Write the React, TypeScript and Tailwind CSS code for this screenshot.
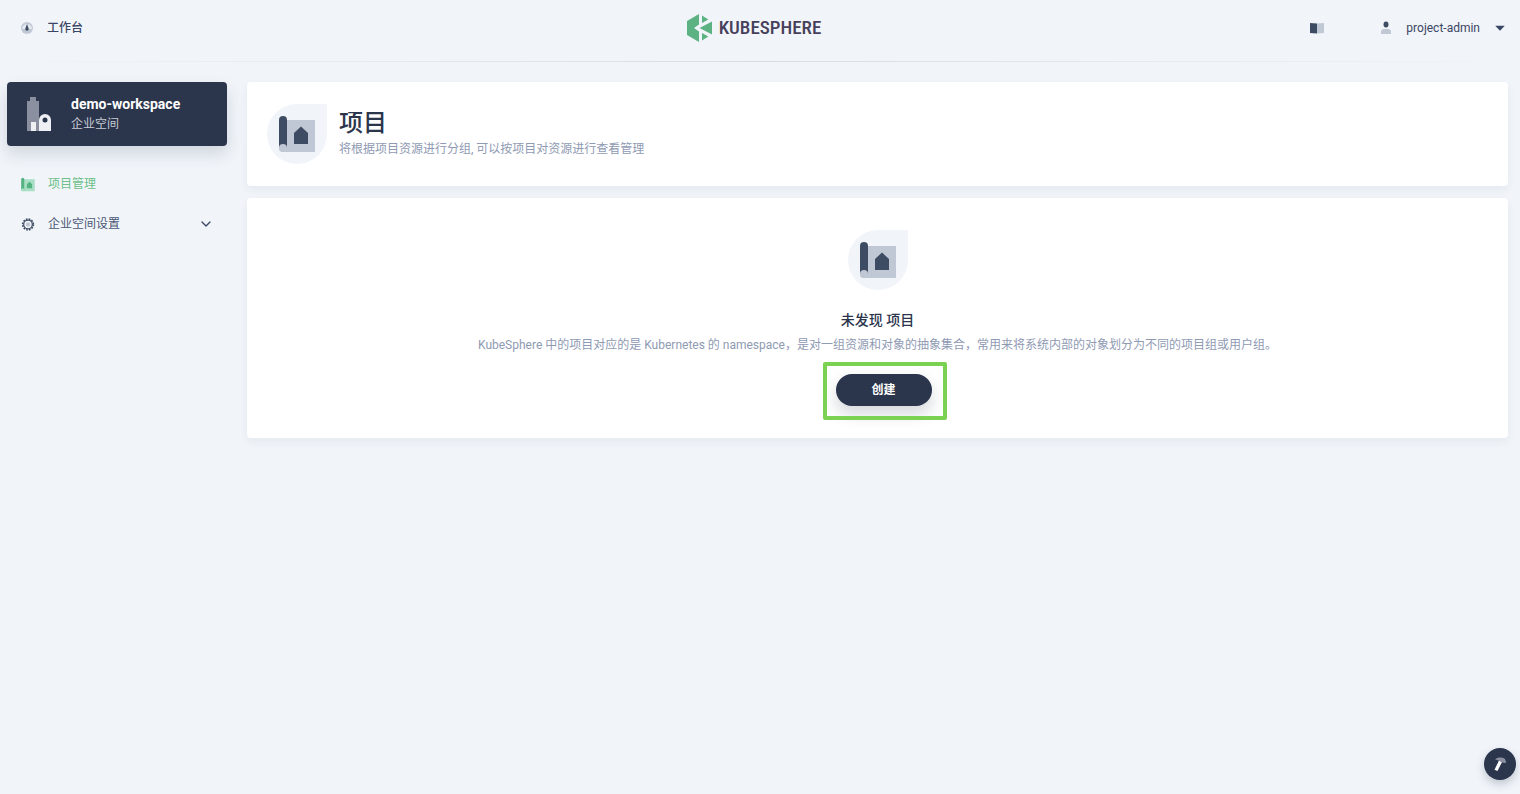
import { ReactNode } from "react";
import { ChevronDown } from "lucide-react";

function ProjectIcon({ className, dark, light }: { className?: string; dark: string; light: string }) {
    return (
        <svg viewBox="0 0 40 40" className={className} aria-hidden="true">
            <path d="M2 6H38V38H6A4 4 0 0 1 2 34Z" fill={light} />
            <path d="M2 6A4 4 0 0 1 10 6V34H2Z" fill={dark} />
            <circle cx="6" cy="34" r="4" fill={light} />
            <path d="M24 12.5L31 19V30H17V19Z" fill={dark} />
        </svg>
    );
}

function IconBadge() {
    return (
        <div className="flex size-[60px] shrink-0 items-center justify-center rounded-full rounded-tr-none bg-[#f1f5fa]">
            <ProjectIcon className="size-10" dark="#3e4c63" light="#c1c8d5" />
        </div>
    );
}

function Logo() {
    return (
        <a href="#" className="flex items-center gap-[6px]" aria-label="KubeSphere">
            <svg viewBox="0 0 26 28" className="h-7 w-[26px]" aria-hidden="true">
                <path d="M12 0V10.5L7 14L12 17.5V28L0 21V7Z" fill="#5cb283" />
                <path d="M15 1.6L21.4 5.6L15 9Z" fill="#5cb283" />
                <path d="M25 7.4V20.6L12.5 14Z" fill="#5cb283" />
                <path d="M15 19L21.4 22.4L15 26.4Z" fill="#5cb283" />
            </svg>
            <span className="font-['Liberation_Sans_Narrow','Roboto_Condensed',Roboto,sans-serif] text-[19px] leading-7 font-medium text-[#47405a]">
                KUBESPHERE
            </span>
        </a>
    );
}

function Header() {
    return (
        <header>
            <div className="grid h-[61px] grid-cols-[1fr_auto_1fr] items-start pt-[14px] pr-6 pl-3">
                <a href="#" className="flex h-7 items-center gap-3 pl-[7px] font-medium text-[#3a4663]">
                    <svg viewBox="0 0 16 16" className="size-4" aria-hidden="true">
                        <circle cx="8" cy="8" r="6" fill="#c1c8d5" />
                        <path d="M3 9A5 5 0 0 1 13 9Z" fill="#e4e8ef" />
                        <path d="M8 4L9.8 9A1.8 1.8 0 0 1 6.2 9Z" fill="#3e4c63" />
                    </svg>
                    工作台
                </a>
                <Logo />
                <div className="flex h-7 items-center justify-end">
                    <a href="#" aria-label="文档">
                        <svg viewBox="0 0 16 16" className="size-4" aria-hidden="true">
                            <path d="M1 3L8 3.5V13.5L1 13Z" fill="#3e4c63" />
                            <path d="M8 3.5L15 3V13L8 13.5Z" fill="#c1c8d5" />
                        </svg>
                    </a>
                    <button className="ml-[53px] flex items-center text-[#3a4663]">
                        <svg viewBox="0 0 16 16" className="size-4" aria-hidden="true">
                            <ellipse cx="8" cy="4.5" rx="2.5" ry="3" fill="#3e4c63" />
                            <path d="M3 14V12A3 3 0 0 1 6 9H10A3 3 0 0 1 13 12V14Z" fill="#c1c8d5" />
                        </svg>
                        <span className="ml-3">project-admin</span>
                        <svg viewBox="0 0 16 16" className="-mr-3 ml-3 size-4" aria-hidden="true">
                            <path d="M3.2 5.8H12.8L8 10.8Z" fill="#3a4663" />
                        </svg>
                    </button>
                </div>
            </div>
            <div className="h-px bg-linear-to-r from-[#f1f5fa] via-[#d8dce5] to-[#f1f5fa]" />
        </header>
    );
}

function NavItem({ icon, children, active, expandable }: {
    icon: ReactNode;
    children: ReactNode;
    active?: boolean;
    expandable?: boolean;
}) {
    return (
        <li>
            <a href="#" className={`flex h-10 items-center gap-3 px-[13px] ${active ? "text-[#6cbf88]" : "text-[#4a5776]"}`}>
                {icon}
                <span className="flex-1">{children}</span>
                {expandable && <ChevronDown size={16} strokeWidth={2} className="text-[#3a4663]" />}
            </a>
        </li>
    );
}

function Sidebar() {
    return (
        <aside className="w-[220px] shrink-0">
            <button className="flex h-16 w-full items-center gap-3 rounded bg-[#2b354c] px-3 text-left shadow-[0_8px_16px_0_rgba(43,53,76,0.16)]">
                <svg viewBox="0 0 40 40" className="size-10" aria-hidden="true">
                    <path d="M8 7H11V3H17V7H20V37H8Z" fill="#8b90a0" />
                    <path d="M12 28H17V37H12Z" fill="#eef0f3" />
                    <path d="M20 37V26A6 6 0 0 1 32 26V37Z" fill="#eef0f3" />
                    <circle cx="26" cy="26" r="2.5" fill="#2b354c" />
                </svg>
                <span className="flex flex-col">
                    <span className="text-sm leading-5 font-bold text-white">demo-workspace</span>
                    <span className="leading-5 text-[#c8ccd5]">企业空间</span>
                </span>
            </button>
            <nav className="mt-[18px]">
                <ul>
                    <NavItem active icon={<ProjectIcon className="size-4 pt-px" dark="#55b282" light="#a9dfc4" />}>
                        项目管理
                    </NavItem>
                    <NavItem
                        expandable
                        icon={
                            <svg viewBox="0 0 16 16" className="size-4 pt-px" aria-hidden="true">
                                <circle cx="8" cy="8" r="5.8" fill="none" stroke="#3e4c63" strokeWidth="1.6" strokeDasharray="1.8 1.24" />
                                <circle cx="8" cy="8" r="4.6" fill="#f1f5fa" stroke="#3e4c63" strokeWidth="1.3" />
                                <circle cx="8" cy="8" r="2.4" fill="#c1c8d5" />
                            </svg>
                        }
                    >
                        企业空间设置
                    </NavItem>
                </ul>
            </nav>
        </aside>
    );
}

function Card({ className, children }: { className: string; children: ReactNode }) {
    return (
        <section className={`rounded bg-white shadow-[0_4px_8px_0_rgba(36,46,66,0.06)] ${className}`}>
            {children}
        </section>
    );
}

export default function App() {
    return (
        <div className="flex min-h-screen flex-col bg-[#f1f5fa] font-[Roboto,'Noto_Sans_CJK_SC',sans-serif] text-xs leading-5">
            <Header />
            <div className="flex gap-5 pt-5 pr-3 pl-[7px]">
                <Sidebar />
                <main className="flex min-w-0 flex-1 flex-col gap-3">
                    <Card className="flex items-start gap-3 px-5 py-[22px]">
                        <IconBadge />
                        <div className="pt-[3px]">
                            <h1 className="text-2xl leading-8 font-medium text-[#2b354c]">项目</h1>
                            <p className="text-[#8f9ab3]">将根据项目资源进行分组, 可以按项目对资源进行查看管理</p>
                        </div>
                    </Card>
                    <Card className="flex flex-col items-center py-8 text-center">
                        <IconBadge />
                        <h2 className="mt-5 text-sm leading-5 font-medium text-[#2b354c]">未发现 项目</h2>
                        <p className="mt-[5px] text-[#8f9ab3]">
                            KubeSphere 中的项目对应的是 Kubernetes 的 namespace，是对一组资源和对象的抽象集合，常用来将系统内部的对象划分为不同的项目组或用户组。
                        </p>
                        <div className="relative mt-[19px] ml-3">
                            <button className="h-8 w-24 rounded-full bg-[#2b354c] font-bold text-white shadow-[0_8px_16px_0_rgba(43,53,76,0.2)]">
                                创建
                            </button>
                            <div className="pointer-events-none absolute -top-3 -right-[15px] -bottom-[14px] -left-[13px] rounded-xs border-4 border-[#7ad152]" />
                        </div>
                    </Card>
                </main>
            </div>
            <button
                aria-label="工具箱"
                className="fixed right-1 bottom-[14px] flex size-8 items-center justify-center rounded-full bg-[#2b354c] shadow-[0_4px_8px_0_rgba(43,53,76,0.25)]"
            >
                <svg viewBox="0 0 20 20" className="size-5" aria-hidden="true">
                    <path d="M9 6.5L12 8L7.5 17L4.5 15.8Z" fill="#ffffff" />
                    <path d="M5 5.2C8 3 12 3 15 5L16.2 8.4L14.5 9L12.5 8.4L8.4 6.4Z" fill="#8b90a0" />
                </svg>
            </button>
        </div>
    );
}
